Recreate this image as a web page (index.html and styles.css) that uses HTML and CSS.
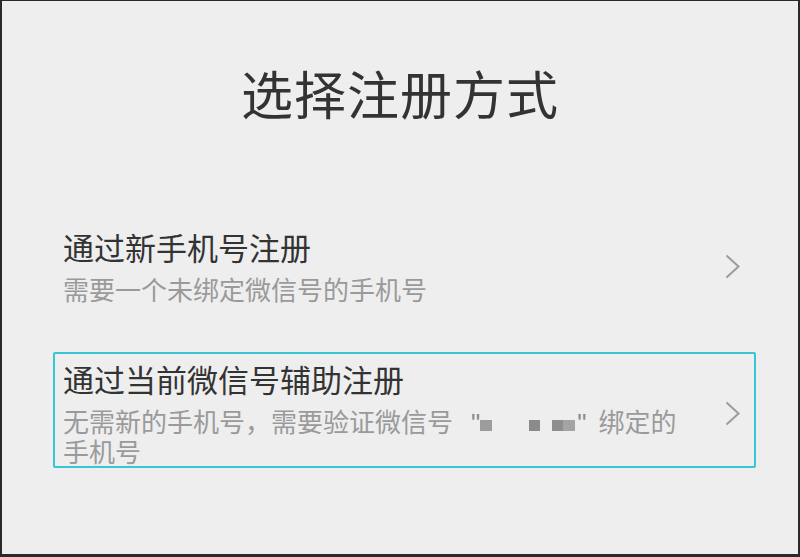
FILE: index.html
```html
<!DOCTYPE html>
<html lang="zh-CN">
<head>
<meta charset="utf-8">
<title>选择注册方式</title>
<link rel="stylesheet" href="styles.css">
</head>
<body>
<div class="page">
  <h1 class="title">选择注册方式</h1>
  <div class="list">
    <div class="item">
      <div class="text">
        <div class="item-title">通过新手机号注册</div>
        <div class="item-sub">需要一个未绑定微信号的手机号</div>
      </div>
      <svg class="chev" viewBox="0 0 15 25" width="15" height="25"><polyline points="1.5,1.5 13.5,12.5 1.5,23.5" fill="none" stroke="#9b9b9b" stroke-width="2"/></svg>
    </div>
    <div class="item selected">
      <div class="text">
        <div class="item-title">通过当前微信号辅助注册</div>
        <div class="item-sub">无需新的手机号，需要验证微信号<span class="q q1">"</span><span class="blur"><i class="b1"></i><i class="b2"></i><i class="b3"></i></span><span class="q q2">"</span><span class="after">绑定的</span>手机号</div>
      </div>
      <svg class="chev" viewBox="0 0 15 25" width="15" height="25"><polyline points="1.5,1.5 13.5,12.5 1.5,23.5" fill="none" stroke="#9b9b9b" stroke-width="2"/></svg>
    </div>
  </div>
</div>
</body>
</html>
```

FILE: styles.css
```css
html, body {
  margin: 0;
  padding: 0;
}
body {
  background: #eeeeee;
  font-family: "Noto Sans CJK SC", "Noto Sans", sans-serif;
}
.page {
  width: 800px;
  height: 557px;
  box-sizing: border-box;
  border: 2px solid #2a2a2a;
  border-top-width: 1px;
  border-bottom-width: 3px;
  background: #eeeeee;
  overflow: hidden;
}
.title {
  margin: 62px 0 0 0;
  font-size: 52px;
  line-height: 60px;
  font-weight: 400;
  color: #333333;
  text-align: center;
  letter-spacing: 1px;
}
.list {
  margin-top: 97px;
  display: flex;
  flex-direction: column;
  gap: 46px;
}
.item {
  margin-left: 51px;
  width: 703px;
  box-sizing: border-box;
  border: 2px solid transparent;
  border-radius: 2px;
  padding: 7.5px 14px 1px 8px;
  display: flex;
  align-items: center;
}
.item.selected {
  border-color: #35c7d6;
}
.text {
  width: 622px;
  flex: none;
}
.chev {
  margin-left: auto;
  flex: none;
  display: block;
}
.item-title {
  font-size: 31px;
  line-height: 34px;
  color: #333333;
}
.item-sub {
  margin-top: 11.5px;
  font-size: 26px;
  line-height: 28px;
  color: #9a9a9a;
}
.q {
  font-family: "Liberation Sans", sans-serif;
  color: #8a8a8a;
}
.q1 {
  margin-left: 18px;
}
.blur {
  display: inline-block;
  width: 97px;
  height: 11px;
  position: relative;
  vertical-align: 1px;
}
.blur i {
  position: absolute;
  top: 0;
  height: 11px;
  display: block;
}
.b1 {
  left: 0;
  width: 12px;
  background: #9c9c9c;
}
.b2 {
  left: 49px;
  width: 11px;
  background: #8b8b8b;
}
.b3 {
  left: 72px;
  width: 23px;
  background: linear-gradient(90deg, #8e8e8e 0 50%, #a4a4a4 50% 100%);
}
.after {
  margin-left: 12px;
}
```
